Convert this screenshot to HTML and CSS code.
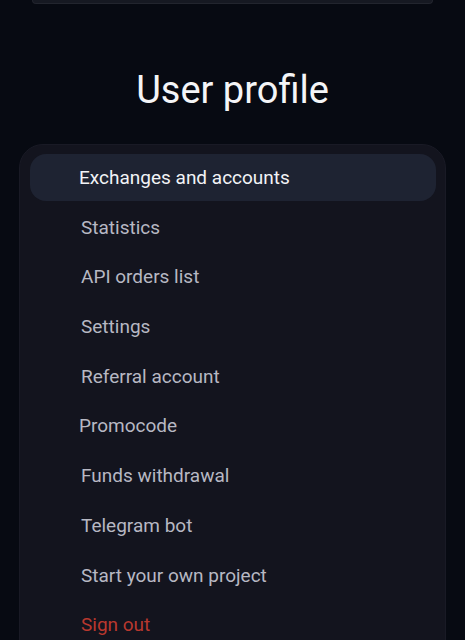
FILE: index.html
```html
<!DOCTYPE html>
<html>
<head>
<meta charset="utf-8">
<link rel="stylesheet" href="styles.css">
</head>
<body>
<div class="topbar"></div>
<h1 class="title">User profile</h1>
<nav class="card">
  <a class="item active shift">Exchanges and accounts</a>
  <a class="item">Statistics</a>
  <a class="item">API orders list</a>
  <a class="item">Settings</a>
  <a class="item">Referral account</a>
  <a class="item shift">Promocode</a>
  <a class="item">Funds withdrawal</a>
  <a class="item">Telegram bot</a>
  <a class="item">Start your own project</a>
  <a class="item danger">Sign out</a>
</nav>
</body>
</html>
```
FILE: styles.css
```css
html, body {
  margin: 0;
  padding: 0;
  background: #070a12;
  font-family: Roboto, "Noto Sans", sans-serif;
  overflow: hidden;
  height: 640px;
}
.topbar {
  margin: 0 32px;
  height: 3px;
  background: #161922;
  border: 1px solid #22252e;
  border-top: none;
  border-radius: 0 0 8px 8px;
}
.title {
  margin: 0;
  padding-top: 62px;
  height: 78px;
  text-align: center;
  font-size: 38px;
  font-weight: 400;
  color: #f4f5f7;
  line-height: 48px;
}
.card {
  margin: 0 19px;
  padding: 9px 9px 20px 10px;
  background: #13141e;
  border: 1px solid #191a25;
  border-radius: 24px;
  display: flex;
  flex-direction: column;
  gap: 2.7px;
}
.item {
  height: 47px;
  display: flex;
  align-items: center;
  padding-left: 51px;
  font-size: 19px;
  color: #b7b8c3;
  border-radius: 16px;
}
.item.shift {
  padding-left: 49px;
}
.item.active {
  background: #1e2332;
  color: #f2f3f6;
}
.item.danger {
  color: #b9382e;
}
```
